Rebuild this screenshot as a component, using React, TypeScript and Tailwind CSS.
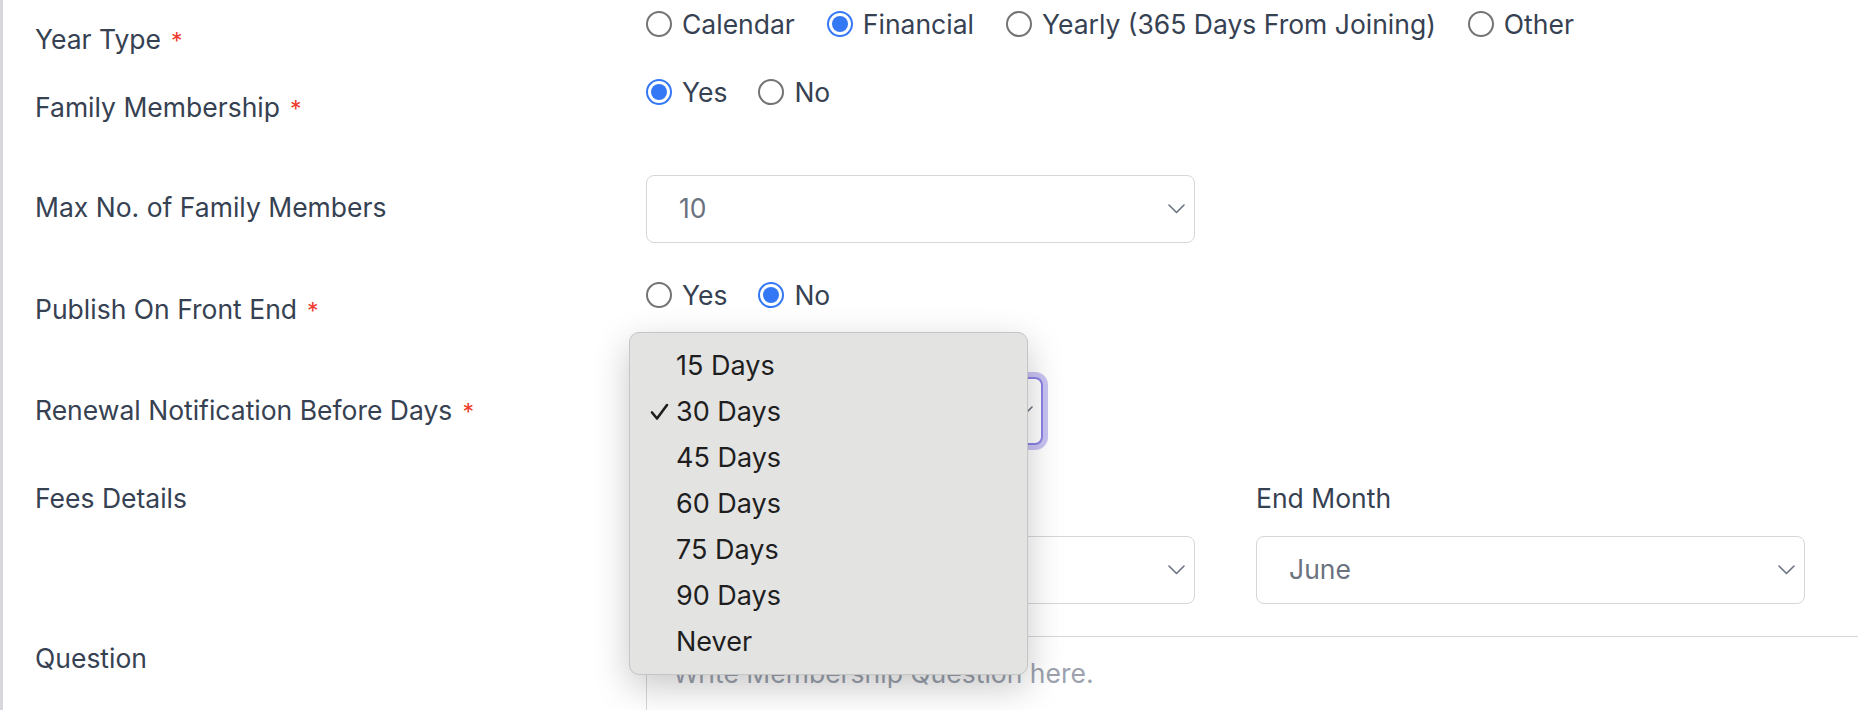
import React from "react";

const days = ["15 Days", "30 Days", "45 Days", "60 Days", "75 Days", "90 Days", "Never"];

function Radio({ label, checked }: { label: string; checked?: boolean }) {
  return (
    <label className="flex items-center gap-[10px] leading-[32px]">
      {checked ? (
        <span className="flex h-[26px] w-[26px] items-center justify-center rounded-full border-2 border-[#3478f6] bg-white">
          <span className="h-[16px] w-[16px] rounded-full bg-[#3478f6]" />
        </span>
      ) : (
        <span className="h-[26px] w-[26px] rounded-full border-2 border-[#737373] bg-white" />
      )}
      <span>{label}</span>
    </label>
  );
}

function Chevron() {
  return (
    <svg width="17" height="10" viewBox="0 0 17 10" fill="none">
      <path d="M1 1l7.5 7.5L16 1" stroke="#6b7280" strokeWidth="1.6" strokeLinecap="round" strokeLinejoin="round" />
    </svg>
  );
}

function Select({ value }: { value?: string }) {
  return (
    <div className="flex h-[68px] w-[549px] items-center justify-between rounded-[8px] border border-[#d6d6db] bg-white pl-[32px] pr-[9px] text-[#6b7280]">
      <span>{value}</span>
      <Chevron />
    </div>
  );
}

function Label({ text, required }: { text: string; required?: boolean }) {
  return (
    <span>
      {text}
      {required && <span className="ml-[10px] text-[23px] text-[#ef3b2d]">*</span>}
    </span>
  );
}

export default function App() {
  return (
    <div className="relative min-h-[710px] overflow-hidden border-l-[3px] border-[#d8d8dc] bg-white font-['Inter',sans-serif] text-[26.5px] text-[#364152]">
      {/* Year Type */}
      <div className="flex h-[60px] items-start">
        <div className="w-[643px] shrink-0 pl-[32px] pt-[23px] leading-[32px]">
          <Label text="Year Type" required />
        </div>
        <div className="flex items-start gap-[32px] pt-[8px]">
          <Radio label="Calendar" />
          <Radio label="Financial" checked />
          <Radio label="Yearly (365 Days From Joining)" />
          <Radio label="Other" />
        </div>
      </div>

      {/* Family Membership */}
      <div className="flex h-[90px] items-start">
        <div className="w-[643px] shrink-0 pl-[32px] pt-[31px] leading-[32px]">
          <Label text="Family Membership" required />
        </div>
        <div className="flex items-start gap-[31px] pt-[16px]">
          <Radio label="Yes" checked />
          <Radio label="No" />
        </div>
      </div>

      {/* Max family members */}
      <div className="flex h-[115px] items-start">
        <div className="w-[643px] shrink-0 pl-[32px] pt-[41px] leading-[32px]">
          <Label text="Max No. of Family Members" />
        </div>
        <div className="pt-[25px]">
          <Select value="10" />
        </div>
      </div>

      {/* Publish */}
      <div className="flex h-[95px] items-start">
        <div className="w-[643px] shrink-0 pl-[32px] pt-[28px] leading-[32px]">
          <Label text="Publish On Front End" required />
        </div>
        <div className="flex items-start gap-[31px] pt-[14px]">
          <Radio label="Yes" />
          <Radio label="No" checked />
        </div>
      </div>

      {/* Renewal */}
      <div className="flex h-[110px] items-start">
        <div className="w-[643px] shrink-0 pl-[32px] pt-[34px] leading-[32px]">
          <Label text="Renewal Notification Before Days" required />
        </div>
        <div className="pt-[17px]">
          <div className="flex h-[68px] w-[397px] items-center justify-between rounded-[8px] border-2 border-[#8b82e6] bg-white pl-[32px] pr-[8px] text-[#364152] ring-[5px] ring-[#c9c4f3]">
            <span>30 Days</span>
            <Chevron />
          </div>
        </div>
      </div>

      {/* Fees */}
      <div className="flex h-[150px] items-start">
        <div className="w-[643px] shrink-0 pl-[32px] pt-[12px] leading-[32px]">
          <Label text="Fees Details" />
        </div>
        <div className="flex gap-[61px] pt-[12px]">
          <div className="flex flex-col gap-[22px]">
            <span className="leading-[32px]">Start Month</span>
            <Select value="July" />
          </div>
          <div className="flex flex-col gap-[22px]">
            <span className="leading-[32px]">End Month</span>
            <Select value="June" />
          </div>
        </div>
      </div>

      {/* Question */}
      <div className="flex items-start">
        <div className="w-[643px] shrink-0 pl-[32px] pt-[22px] leading-[32px]">
          <Label text="Question" />
        </div>
        <div className="flex-1 pt-[16px]">
          <div className="-mr-[10px] h-[140px] rounded-tl-[8px] border border-[#d6d6db] pl-[26px] pt-[20px] leading-[32px] text-[#9ca3af]">
            Write Membership Question here.
          </div>
        </div>
      </div>

      {/* Native select menu (open) */}
      <div className="absolute left-[626px] top-[332px] w-[399px] rounded-[10px] border border-[#c5c5c5] bg-[#e3e3e2] pb-[9px] pt-[10px] text-[27px] text-[#1e1e1e] shadow-[0_12px_36px_rgba(0,0,0,0.22)]">
        {days.map((d) => (
          <div key={d} className="relative flex h-[46px] items-center pl-[46px]">
            {d === "30 Days" && (
              <svg className="absolute left-[20px]" width="19" height="18" viewBox="0 0 19 18" fill="none">
                <path d="M2 9.5l5 6L17 2" stroke="#1e1e1e" strokeWidth="2.6" strokeLinecap="round" strokeLinejoin="round" />
              </svg>
            )}
            {d}
          </div>
        ))}
      </div>
    </div>
  );
}
